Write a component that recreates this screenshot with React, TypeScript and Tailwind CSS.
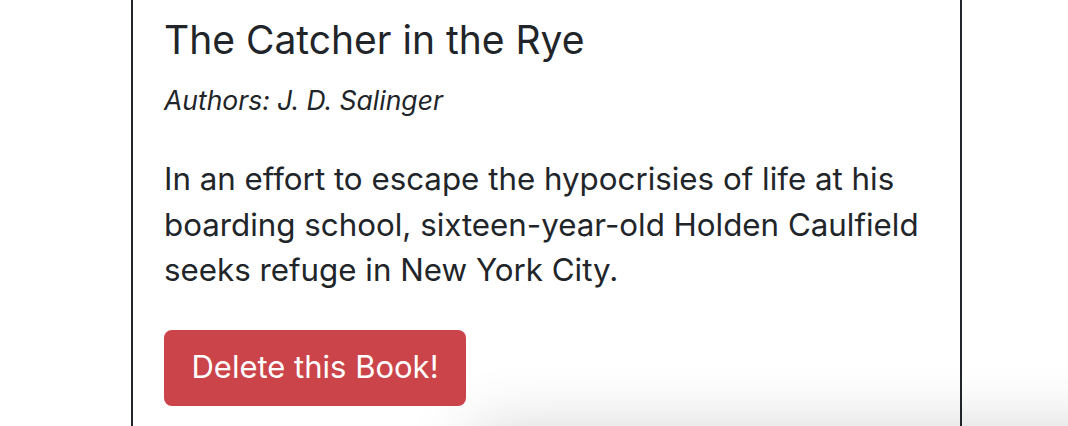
export default function App() {
  return (
    <div className="relative w-[1068px] h-[426px] overflow-hidden bg-white text-[#212529] font-['Inter',sans-serif]">
      {/* soft shadow from an element just below the fold */}
      <div className="absolute left-[470px] right-[-80px] top-[434px] h-[120px] rounded-[24px] bg-white shadow-[0_0_70px_rgba(0,0,0,0.2)]" />

      <div className="relative ml-[131px] w-[831px] h-full border-x-2 border-[#212529] pl-[31px] pt-[16px]">
        <h2 className="text-[39px] leading-[48px] font-normal">The Catcher in the Rye</h2>
        <p className="mt-[19px] text-[26.5px] leading-[34px] italic">Authors: J. D. Salinger</p>

        <p className="mt-[40px] text-[31.3px] leading-[45.5px]">
          In an effort to escape the hypocrisies of life at his
          <br />
          boarding school, sixteen-year-old Holden Caulfield
          <br />
          seeks refuge in New York City.
        </p>

        <button className="mt-[36px] h-[76px] w-[302px] rounded-[8px] bg-[#cb444a] text-white text-[31px]">
          Delete this Book!
        </button>
      </div>
    </div>
  );
}
